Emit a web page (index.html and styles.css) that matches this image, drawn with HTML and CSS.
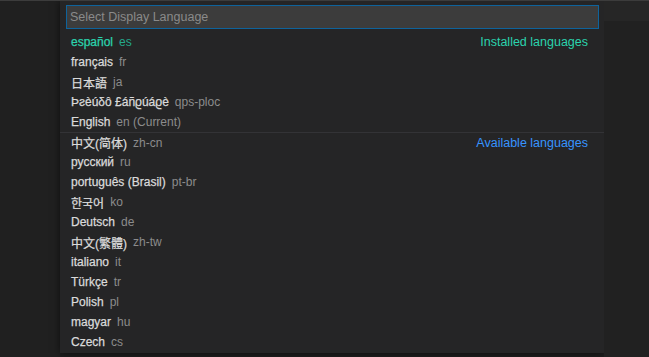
FILE: index.html
```html
<!DOCTYPE html>
<html lang="en">

<head>
  <meta charset="UTF-8">
  <meta name="viewport" content="width=device-width, initial-scale=1.0">
  <title>Select Display Language</title>
  <link rel="stylesheet" href="styles.css">
</head>

<body>
  <div class="gutter"></div>
  <main class="picker">
    <div class="picker-input">
      <input type="text" placeholder="Select Display Language">
    </div>
    <ul class="list">
      <li class="row row-active"><span class="label">español</span><span class="desc">es</span><span class="group group-installed">Installed languages</span></li>
      <li class="row"><span class="label">français</span><span class="desc">fr</span></li>
      <li class="row"><span class="label">日本語</span><span class="desc">ja</span></li>
      <li class="row"><span class="label">Þƨèúδô £áñϱúáϱè</span><span class="desc">qps-ploc</span></li>
      <li class="row"><span class="label">English</span><span class="desc">en (Current)</span></li>
      <li class="row row-sep"><span class="label">中文(简体)</span><span class="desc">zh-cn</span><span class="group group-available">Available languages</span></li>
      <li class="row"><span class="label">русский</span><span class="desc">ru</span></li>
      <li class="row"><span class="label">português (Brasil)</span><span class="desc">pt-br</span></li>
      <li class="row"><span class="label">한국어</span><span class="desc">ko</span></li>
      <li class="row"><span class="label">Deutsch</span><span class="desc">de</span></li>
      <li class="row"><span class="label">中文(繁體)</span><span class="desc">zh-tw</span></li>
      <li class="row"><span class="label">italiano</span><span class="desc">it</span></li>
      <li class="row"><span class="label">Türkçe</span><span class="desc">tr</span></li>
      <li class="row"><span class="label">Polish</span><span class="desc">pl</span></li>
      <li class="row"><span class="label">magyar</span><span class="desc">hu</span></li>
      <li class="row"><span class="label">Czech</span><span class="desc">cs</span></li>
    </ul>
  </main>
  <div class="side">
    <div class="side-top"></div>
  </div>
</body>

</html>
```
FILE: styles.css
```css
*,
*::before,
*::after {
  box-sizing: border-box;
}
html,
body {
  height: 100%;
}
body {
  display: flex;
  margin: 0;
  overflow: hidden;
  background: #1e1e1e;
  border-top: 1px solid #3c3c3c;
  font-family: "Liberation Sans", "Noto Sans CJK SC", "Noto Sans CJK KR", sans-serif;
  font-size: 12px;
  color: #cccccc;
}
.gutter {
  width: 60px;
  flex: none;
  background: #202020;
}
.picker {
  width: 544px;
  height: 352px;
  flex: none;
  background: #252526;
  box-shadow: 0 0 8px rgba(0, 0, 0, .6);
}
.picker-input {
  padding: 4px 5px 3px 6px;
}
.picker-input input {
  display: block;
  width: 100%;
  height: 24px;
  padding: 0 3px;
  background: #3c3c3c;
  border: 1px solid #0e639c;
  color: #cccccc;
  font: inherit;
  font-size: 12.5px;
  outline: 0;
}
.picker-input input::placeholder {
  color: #8a8a8a;
}
.list {
  list-style: none;
  margin: 0;
  padding: 0;
}
.row {
  display: flex;
  align-items: center;
  height: 20px;
  padding: 0 16px 0 11px;
  white-space: nowrap;
}
.row-sep {
  border-top: 1px solid #333336;
}
.label {
  color: #dadada;
  -webkit-text-stroke: .25px #dadada;
}
.desc {
  margin-left: 6px;
  font-size: 12px;
  color: #8c8c8c;
}
.row-active .label {
  color: #2bd3ad;
  -webkit-text-stroke-color: #2bd3ad;
}
.row-active .desc {
  color: #24a88b;
}
.group {
  margin-left: auto;
  font-size: 12.5px;
}
.group-installed {
  color: #2bd3ad;
}
.group-available {
  color: #3794ff;
}
.side {
  flex: 1;
  background: #212121;
}
.side-top {
  height: 20px;
  background: #262626;
}
```
